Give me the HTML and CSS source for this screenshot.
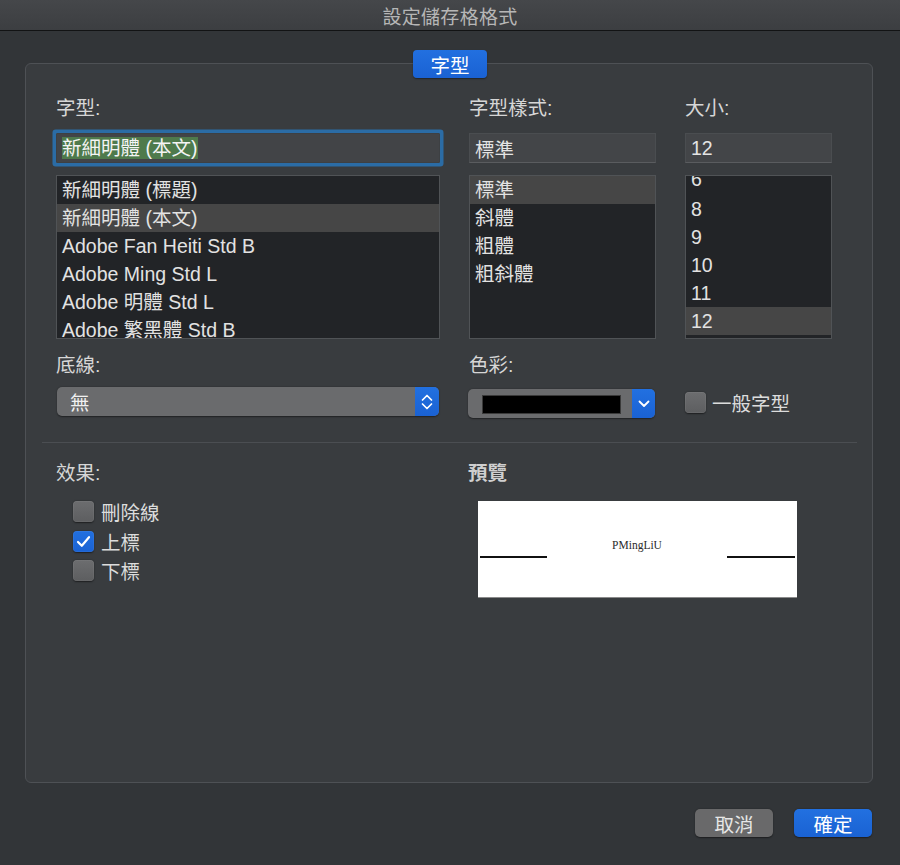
FILE: index.html
```html
<!DOCTYPE html>
<html lang="zh-Hant">
<head>
<meta charset="utf-8">
<title>設定儲存格格式</title>
<link rel="stylesheet" href="styles.css">
</head>
<body>
<div class="window">
  <header class="titlebar">設定儲存格格式</header>
  <div class="tabbar"><span class="tab">字型</span></div>
  <section class="group">
    <div class="top-grid">
      <div class="label">字型:</div>
      <div class="label">字型樣式:</div>
      <div class="label">大小:</div>

      <div class="field focus"><span class="sel">新細明體 (本文)</span></div>
      <div class="field">標準</div>
      <div class="field">12</div>

      <ul class="list">
        <li>新細明體 (標題)</li>
        <li class="on">新細明體 (本文)</li>
        <li>Adobe Fan Heiti Std B</li>
        <li>Adobe Ming Std L</li>
        <li>Adobe 明體 Std L</li>
        <li>Adobe 繁黑體 Std B</li>
      </ul>
      <ul class="list">
        <li class="on">標準</li>
        <li>斜體</li>
        <li>粗體</li>
        <li>粗斜體</li>
      </ul>
      <ul class="list sizes">
        <li>6</li>
        <li>8</li>
        <li>9</li>
        <li>10</li>
        <li>11</li>
        <li class="on">12</li>
      </ul>

      <div class="label">底線:</div>
      <div class="label">色彩:</div>
      <div></div>

      <div class="popup underline">
        <span class="val">無</span>
        <span class="arrows">
          <svg width="12" height="18" viewBox="0 0 12 18"><path d="M1.5 7 L6 2.5 L10.5 7 M1.5 11 L6 15.5 L10.5 11" stroke="#fff" stroke-width="1.7" fill="none" stroke-linecap="round" stroke-linejoin="round"/></svg>
        </span>
      </div>
      <div class="popup color">
        <span class="swatch"></span>
        <span class="arrows narrow">
          <svg width="12" height="8" viewBox="0 0 12 8"><path d="M1.5 1.5 L6 6 L10.5 1.5" stroke="#fff" stroke-width="1.8" fill="none" stroke-linecap="round" stroke-linejoin="round"/></svg>
        </span>
      </div>
      <label class="check general"><span class="box"></span><span>一般字型</span></label>
    </div>

    <div class="sep"></div>

    <div class="bottom-grid">
      <div class="effects">
        <div class="label">效果:</div>
        <div class="checks">
          <label class="check"><span class="box"></span><span>刪除線</span></label>
          <label class="check"><span class="box checked"><svg width="21" height="21" viewBox="0 0 21 21"><path d="M5 11 L8.8 14.8 L16 6.2" stroke="#fff" stroke-width="2.2" fill="none" stroke-linecap="round" stroke-linejoin="round"/></svg></span><span>上標</span></label>
          <label class="check"><span class="box"></span><span>下標</span></label>
        </div>
      </div>
      <div class="preview-col">
        <div class="label strong">預覽</div>
        <div class="preview">
          <span class="pline"></span>
          <span class="ptext">PMingLiU</span>
          <span class="pline right"></span>
        </div>
      </div>
    </div>
  </section>
  <footer class="footer">
    <span class="btn cancel">取消</span>
    <span class="btn ok">確定</span>
  </footer>
</div>
</body>
</html>
```

FILE: styles.css
```css
html, body {
  margin: 0;
  padding: 0;
}
body {
  width: 900px;
  height: 865px;
  overflow: hidden;
  background: #323538;
  font-family: "Liberation Sans", "Noto Sans CJK TC", sans-serif;
  font-size: 19.5px;
  color: #d8d8d8;
}
.window {
  width: 900px;
  height: 865px;
}
.titlebar {
  height: 30px;
  border-bottom: 1px solid #121314;
  background: linear-gradient(#45474a, #3c3e41);
  display: flex;
  align-items: center;
  justify-content: center;
  color: #b6b6b6;
  font-size: 19px;
  letter-spacing: 0.3px;
}
.tabbar {
  display: flex;
  justify-content: center;
  margin-top: 19px;
  position: relative;
  z-index: 1;
}
.tab {
  width: 74px;
  height: 28px;
  border-radius: 4px;
  background: linear-gradient(#2270e0, #1a62d3);
  color: #fff;
  display: flex;
  align-items: center;
  justify-content: center;
  box-shadow: 0 1px 1.5px rgba(0, 0, 0, 0.4);
}
.group {
  margin: -15px 0 0 25px;
  width: 848px;
  height: 720px;
  box-sizing: border-box;
  border: 1px solid #4e5155;
  border-radius: 6px;
  background: #393c3f;
  padding: 33px 40px 0 30px;
}
.top-grid {
  display: grid;
  grid-template-columns: 384px 187px 147px;
  column-gap: 29px;
  grid-template-rows: 36px 42px 179px 33px 30px;
}
.label {
  height: 22px;
  line-height: 22px;
  color: #d6d6d6;
  white-space: nowrap;
}
.label.strong {
  font-weight: bold;
  color: #cfcfcf;
}
.field {
  height: 30px;
  box-sizing: border-box;
  background: #434548;
  border: 1px solid #4a4d50;
  border-bottom-color: #5a5c5f;
  display: flex;
  align-items: center;
  padding-left: 5px;
  color: #e4e4e4;
}
.field.focus {
  background: #424447;
  border-color: #3d4043;
  border-radius: 1px;
  box-shadow: 0 0 0 3.5px #2b6ca5;
}
.sel {
  background: #4e7a4c;
  color: #f4f4f4;
  line-height: 22px;
  padding-right: 1px;
}
.list {
  height: 164px;
  box-sizing: border-box;
  margin: 0;
  padding: 0;
  list-style: none;
  border: 1px solid #505356;
  background: #222427;
  overflow: hidden;
}
.list li {
  height: 28px;
  line-height: 28px;
  padding-left: 5px;
  white-space: nowrap;
  color: #e2e2e2;
}
.list li.on {
  background: #464646;
}
.list.sizes li:first-child {
  margin-top: -9px;
  line-height: 25px;
}
.popup {
  height: 29px;
  box-sizing: border-box;
  background: #6a6b6d;
  border-radius: 5px;
  display: flex;
  align-items: stretch;
  overflow: hidden;
  box-shadow: 0 0.5px 1.5px rgba(0, 0, 0, 0.45);
}
.popup.underline {
  margin: 0 1px;
}
.popup .val {
  flex: 1;
  display: flex;
  align-items: center;
  padding-left: 13px;
  color: #f0f0f0;
}
.popup .arrows {
  width: 24px;
  background: linear-gradient(#2270e0, #1a62d3);
  display: flex;
  align-items: center;
  justify-content: center;
}
.popup .arrows.narrow {
  width: 23px;
}
.popup.color {
  margin-top: 2px;
  margin-right: 1px;
  margin-left: -1px;
  align-items: center;
}
.swatch {
  width: 139px;
  height: 19px;
  box-sizing: border-box;
  background: #000;
  border: 1px solid #3a3a3a;
  margin-left: 14px;
  margin-right: 10px;
  margin-top: 1px;
}
.popup.color .arrows {
  align-self: stretch;
  margin-left: auto;
}
.check {
  display: flex;
  align-items: center;
  gap: 7px;
  height: 21px;
  color: #dcdcdc;
  white-space: nowrap;
}
.check.general {
  margin-top: 5px;
  gap: 6px;
}
.box {
  width: 21px;
  height: 21px;
  box-sizing: border-box;
  border-radius: 4px;
  background: linear-gradient(#6c6d6f, #5d5e60);
  box-shadow: inset 0 0 0 0.5px rgba(255, 255, 255, 0.1), 0 0.5px 1.5px rgba(0, 0, 0, 0.5);
  flex: none;
}
.box.checked {
  background: linear-gradient(#2270e0, #1a62d3);
  display: flex;
}
.sep {
  height: 1px;
  background: #4b4e52;
  margin: 25px -25px 0 -14px;
}
.bottom-grid {
  display: grid;
  grid-template-columns: 384px 1fr;
  column-gap: 28px;
  margin-top: 19px;
}
.checks {
  margin-top: 17px;
  padding-left: 17px;
  display: flex;
  flex-direction: column;
  gap: 8.5px;
}
.preview {
  margin-top: 17px;
  margin-left: 10px;
  width: 319px;
  height: 97px;
  box-sizing: border-box;
  background: #fff;
  border-bottom: 1px solid #8a8a8a;
  display: flex;
  align-items: flex-start;
  padding: 0 2px;
}
.pline {
  width: 67px;
  height: 2px;
  background: #111;
  margin-top: 55px;
  flex: none;
}
.pline.right {
  width: 68px;
}
.ptext {
  flex: 1;
  text-align: center;
  margin-top: 37px;
  line-height: 14px;
  font-family: "Liberation Serif", serif;
  font-size: 11.5px;
  color: #2a2a2a;
}
.footer {
  display: flex;
  justify-content: flex-end;
  gap: 21px;
  margin-top: 26px;
  padding-right: 28px;
}
.btn {
  width: 78px;
  height: 28px;
  border-radius: 5px;
  display: flex;
  align-items: center;
  justify-content: center;
  box-shadow: 0 0.5px 1.5px rgba(0, 0, 0, 0.45);
}
.btn.cancel {
  background: #69696a;
  color: #e6e6e6;
}
.btn.ok {
  background: linear-gradient(#2270e0, #1a62d3);
  color: #fff;
}
```
